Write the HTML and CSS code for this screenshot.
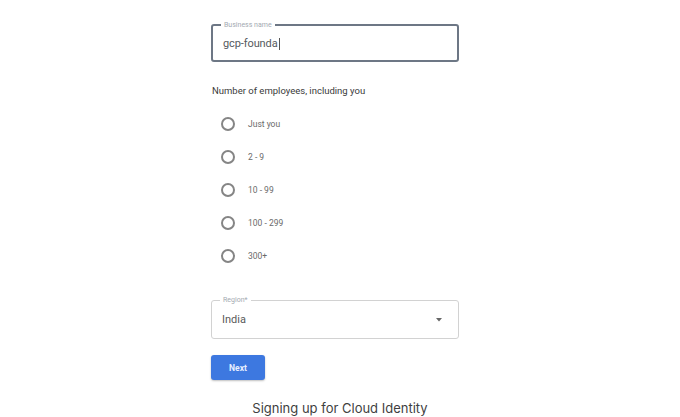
FILE: index.html
```html
<!DOCTYPE html>
<html>
<head>
<meta charset="utf-8">
<link rel="stylesheet" href="styles.css">
</head>
<body>
<main class="page">
  <form class="form">
    <fieldset class="field field-active">
      <legend class="field-label">Business name</legend>
      <div class="field-value">gcp-founda<span class="caret"></span></div>
    </fieldset>

    <p class="question">Number of employees, including you</p>

    <ul class="options">
      <li class="option"><span class="radio"></span><span class="option-text">Just you</span></li>
      <li class="option"><span class="radio"></span><span class="option-text">2 - 9</span></li>
      <li class="option"><span class="radio"></span><span class="option-text">10 - 99</span></li>
      <li class="option"><span class="radio"></span><span class="option-text">100 - 299</span></li>
      <li class="option"><span class="radio"></span><span class="option-text">300+</span></li>
    </ul>

    <fieldset class="field field-select">
      <legend class="field-label">Region*</legend>
      <div class="field-value select-value">
        <span>India</span>
        <svg class="arrow" width="6" height="4" viewBox="0 0 6 4"><path d="M0 0 L6 0 L3 3.5 Z" fill="#666"/></svg>
      </div>
    </fieldset>

    <button type="button" class="next">Next</button>
  </form>
  <p class="caption">Signing up for Cloud Identity</p>
</main>
</body>
</html>
```

FILE: styles.css
```css
* { box-sizing: border-box; }
html, body { margin: 0; padding: 0; background: #fff; }
body { font-family: Roboto, "Liberation Sans", sans-serif; }

.page {
  width: 680px;
  height: 417px;
  display: flex;
  flex-direction: column;
  overflow: hidden;
}

.form {
  width: 248px;
  margin: 0 0 0 211px;
  display: flex;
  flex-direction: column;
}

.field {
  margin: 0;
  padding: 0 10px;
  border-radius: 3px;
  min-width: 0;
}

.field-active {
  margin-top: 21px;
  border: 2px solid #6d7785;
  height: 41px;
}

.field-select {
  margin-top: 33px;
  border: 1.5px solid #d2d2d2;
  height: 43px;
}

.field-label {
  font-size: 7px;
  line-height: 8px;
  color: #a3a9b1;
  padding: 0 3px;
  margin-left: -2px;
}

.field-value {
  font-size: 11px;
  line-height: 14px;
  color: #555a60;
  padding-top: 8px;
  display: flex;
  align-items: center;
  letter-spacing: -0.1px;
}

.caret {
  display: inline-block;
  width: 1px;
  height: 12px;
  background: #555;
  margin-left: 1px;
}

.select-value {
  justify-content: space-between;
  padding-top: 9px;
  font-size: 11px;
  color: #5a5a5a;
  letter-spacing: 0;
}

.arrow { margin-right: 6px; }

.question {
  margin: 23px 0 0 1px;
  font-size: 9.5px;
  line-height: 12px;
  color: #3a3a3a;
}

.options {
  list-style: none;
  margin: 20px 0 0 0;
  padding: 0 0 0 10px;
  display: flex;
  flex-direction: column;
  gap: 19px;
}

.option {
  display: flex;
  align-items: center;
  height: 14px;
}

.radio {
  width: 14px;
  height: 14px;
  border: 2px solid #858585;
  border-radius: 50%;
  flex: none;
}

.option-text {
  margin-left: 13px;
  font-size: 8.5px;
  color: #6a6a6a;
}

.next {
  margin-top: 16px;
  width: 54px;
  height: 25px;
  border: 0;
  border-radius: 3px;
  background: #3d78e0;
  color: #e8efff;
  font-family: Roboto, "Liberation Sans", sans-serif;
  font-size: 8.5px;
  font-weight: 700;
  padding: 0;
  box-shadow: 0 1px 2px rgba(0,0,0,0.25);
}

.caption {
  margin: 20px 0 0 0;
  text-align: center;
  font-family: Inter, "Liberation Sans", sans-serif;
  font-size: 13px;
  line-height: 16px;
  color: #3f3f3f;
}
```
